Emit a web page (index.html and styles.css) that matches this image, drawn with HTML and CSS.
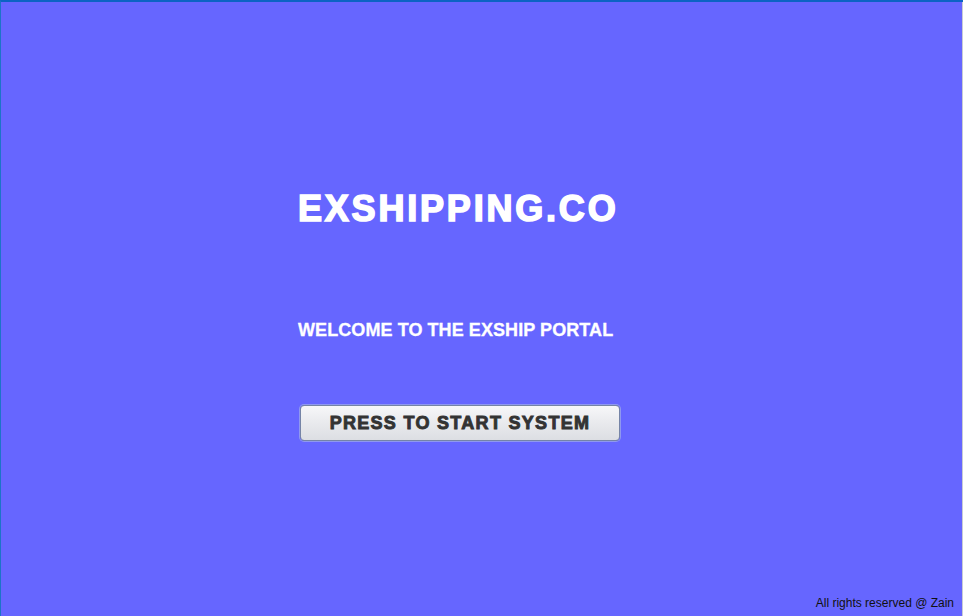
FILE: index.html
```html
<!DOCTYPE html>
<html>
<head>
<meta charset="utf-8">
<link rel="stylesheet" href="styles.css">
</head>
<body>
<div class="frame">
  <main class="panel">
    <div class="content">
      <h1 class="title">EXSHIPPING.CO</h1>
      <p class="welcome">WELCOME TO THE EXSHIP PORTAL</p>
      <button class="start">PRESS TO START SYSTEM</button>
    </div>
    <footer class="footer">All rights reserved @ Zain</footer>
  </main>
  <div class="edge"></div>
</div>
</body>
</html>
```
FILE: styles.css
```css
html, body {
  margin: 0;
  padding: 0;
  width: 963px;
  height: 616px;
  overflow: hidden;
}
body {
  font-family: "Liberation Sans", Arial, sans-serif;
}
.frame {
  display: flex;
  width: 963px;
  height: 616px;
  box-sizing: border-box;
  border-top: 2px solid #0b63c4;
  border-left: 1px solid #1c74c8;
  background: #6666ff;
}
.panel {
  flex: 1;
  display: flex;
  flex-direction: column;
  background: #6666ff;
}
.edge {
  width: 1px;
  background: #c8ccd4;
}
.content {
  flex: 1;
  display: flex;
  flex-direction: column;
  align-items: flex-start;
  padding-left: 297px;
  padding-top: 187px;
}
.title {
  margin: 0;
  font-size: 36px;
  line-height: 40px;
  font-weight: bold;
  color: #ffffff;
  letter-spacing: 2.8px;
  -webkit-text-stroke: 1.6px #ffffff;
}
.welcome {
  margin: 90px 0 0 0;
  font-size: 18px;
  line-height: 22px;
  font-weight: bold;
  color: #ffffff;
  letter-spacing: 0.08px;
  -webkit-text-stroke: 0.3px #ffffff;
}
.start {
  margin: 64px 0 0 2px;
  width: 320px;
  height: 36px;
  padding: 0;
  border: 1px solid #7584a6;
  border-radius: 4px;
  box-shadow: 0 0 0 1px #8f98f0;
  background: linear-gradient(#f7f7f9 0%, #eaebee 45%, #dcdee3 100%);
  font-family: "Liberation Sans", Arial, sans-serif;
  font-size: 18px;
  font-weight: bold;
  color: #333333;
  letter-spacing: 1.3px;
  -webkit-text-stroke: 0.9px #333333;
}
.footer {
  align-self: flex-end;
  padding: 0 8px 6px 0;
  font-size: 12px;
  line-height: 14px;
  color: #111111;
}
```
